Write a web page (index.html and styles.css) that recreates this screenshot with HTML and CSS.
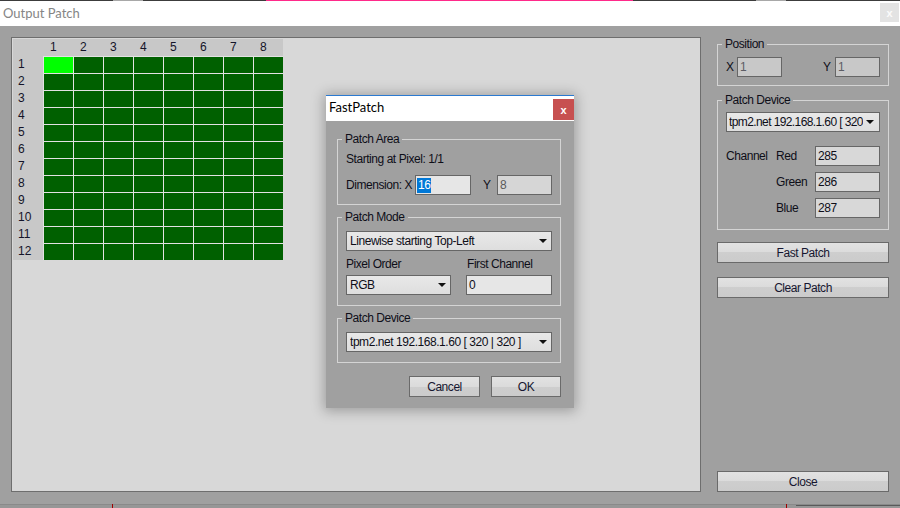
FILE: index.html
```html
<!DOCTYPE html>
<html>
<head>
<meta charset="utf-8">
<title>Output Patch</title>
<link rel="stylesheet" href="styles.css">
</head>
<body>
<div class="topstrip">
  <i class="s dk w113"></i><i class="s lg w30"></i><i class="s dk w123"></i><i class="s pk w367"></i><i class="s dk w123"></i><i class="s lg w30"></i><i class="s dk wrest"></i>
</div>
<div class="titlebar">
  <span class="title">Output Patch</span>
  <span class="winclose">x</span>
</div>
<div class="main">
  <div class="panel">
    <div class="grid">
      <div class="hd"></div>
      <div class="hd col">1</div><div class="hd col">2</div><div class="hd col">3</div><div class="hd col">4</div><div class="hd col">5</div><div class="hd col">6</div><div class="hd col">7</div><div class="hd col">8</div>
      <div class="hd row">1</div><div class="cell on"></div><div class="cell"></div><div class="cell"></div><div class="cell"></div><div class="cell"></div><div class="cell"></div><div class="cell"></div><div class="cell"></div>
      <div class="hd row">2</div><div class="cell"></div><div class="cell"></div><div class="cell"></div><div class="cell"></div><div class="cell"></div><div class="cell"></div><div class="cell"></div><div class="cell"></div>
      <div class="hd row">3</div><div class="cell"></div><div class="cell"></div><div class="cell"></div><div class="cell"></div><div class="cell"></div><div class="cell"></div><div class="cell"></div><div class="cell"></div>
      <div class="hd row">4</div><div class="cell"></div><div class="cell"></div><div class="cell"></div><div class="cell"></div><div class="cell"></div><div class="cell"></div><div class="cell"></div><div class="cell"></div>
      <div class="hd row">5</div><div class="cell"></div><div class="cell"></div><div class="cell"></div><div class="cell"></div><div class="cell"></div><div class="cell"></div><div class="cell"></div><div class="cell"></div>
      <div class="hd row">6</div><div class="cell"></div><div class="cell"></div><div class="cell"></div><div class="cell"></div><div class="cell"></div><div class="cell"></div><div class="cell"></div><div class="cell"></div>
      <div class="hd row">7</div><div class="cell"></div><div class="cell"></div><div class="cell"></div><div class="cell"></div><div class="cell"></div><div class="cell"></div><div class="cell"></div><div class="cell"></div>
      <div class="hd row">8</div><div class="cell"></div><div class="cell"></div><div class="cell"></div><div class="cell"></div><div class="cell"></div><div class="cell"></div><div class="cell"></div><div class="cell"></div>
      <div class="hd row">9</div><div class="cell"></div><div class="cell"></div><div class="cell"></div><div class="cell"></div><div class="cell"></div><div class="cell"></div><div class="cell"></div><div class="cell"></div>
      <div class="hd row">10</div><div class="cell"></div><div class="cell"></div><div class="cell"></div><div class="cell"></div><div class="cell"></div><div class="cell"></div><div class="cell"></div><div class="cell"></div>
      <div class="hd row">11</div><div class="cell"></div><div class="cell"></div><div class="cell"></div><div class="cell"></div><div class="cell"></div><div class="cell"></div><div class="cell"></div><div class="cell"></div>
      <div class="hd row">12</div><div class="cell"></div><div class="cell"></div><div class="cell"></div><div class="cell"></div><div class="cell"></div><div class="cell"></div><div class="cell"></div><div class="cell"></div>
    </div>
  </div>
  <div class="side">
    <fieldset class="grp pos">
      <legend>Position</legend>
      <div class="posrow">
        <div class="pair"><span class="lx">X</span><div class="tb dis wx">1</div></div>
        <div class="pair"><span class="ly">Y</span><div class="tb dis wy">1</div></div>
      </div>
    </fieldset>
    <fieldset class="grp dev">
      <legend>Patch Device</legend>
      <div class="sel tight"><span class="txt">tpm2.net 192.168.1.60 [ 320</span><i class="arrow"></i></div>
      <div class="chgrid">
        <span>Channel</span><span>Red</span><div class="tb">285</div>
        <span></span><span>Green</span><div class="tb">286</div>
        <span></span><span>Blue</span><div class="tb">287</div>
      </div>
    </fieldset>
    <div class="btn fast">Fast Patch</div>
    <div class="btn clear">Clear Patch</div>
    <div class="btn close">Close</div>
  </div>
</div>
<div class="bottom"><i class="tick t1"></i><i class="tick t2"></i><i class="bline"></i></div>

<div class="dlg">
  <div class="dlg-title"><span class="dlg-name">FastPatch</span><span class="dlg-close">x</span></div>
  <div class="dlg-body">
    <fieldset class="grp area">
      <legend>Patch Area</legend>
      <div class="line">Starting at Pixel: 1/1</div>
      <div class="dimrow">
        <span class="dlab">Dimension: X</span>
        <div class="tb light dx"><span class="hl">16</span></div>
        <span class="dylab">Y</span>
        <div class="tb dy">8</div>
      </div>
    </fieldset>
    <fieldset class="grp mode">
      <legend>Patch Mode</legend>
      <div class="sel">
        <span class="txt">Linewise starting Top-Left</span><i class="arrow"></i>
      </div>
      <div class="modegrid">
        <span class="line">Pixel Order</span>
        <span class="line fc">First Channel</span>
        <div class="sel"><span class="txt">RGB</span><i class="arrow"></i></div>
        <div class="tb light">0</div>
      </div>
    </fieldset>
    <fieldset class="grp pdev">
      <legend>Patch Device</legend>
      <div class="sel"><span class="txt">tpm2.net 192.168.1.60 [ 320 | 320 ]</span><i class="arrow"></i></div>
    </fieldset>
    <div class="dlg-btns">
      <div class="btn cancel">Cancel</div>
      <div class="btn ok">OK</div>
    </div>
  </div>
</div>
</body>
</html>
```

FILE: styles.css
```css
* { box-sizing: border-box; }
html, body { margin: 0; padding: 0; }
body {
  width: 900px;
  height: 508px;
  overflow: hidden;
  background: #a0a0a0;
  font-family: "Liberation Sans", Arial, sans-serif;
  font-size: 12px;
  letter-spacing: -0.45px;
  color: #0e0e18;
  display: flex;
  flex-direction: column;
}
i { font-style: normal; display: block; }

/* top strip */
.topstrip { height: 1px; display: flex; flex: none; }
.s { height: 1px; }
.dk { background: #3c3c3c; }
.lg { background: #a8a8a8; }
.pk { background: #ff2a8a; }
.w113 { width: 113px; }
.w30 { width: 30px; }
.w123 { width: 123px; }
.w367 { width: 367px; }
.wrest { flex: 1; }

/* window title */
.titlebar {
  height: 25px;
  flex: none;
  background: #ffffff;
  display: flex;
  justify-content: space-between;
  align-items: flex-start;
  padding: 0 1px 0 3px;
}
.title {
  font-family: "Segoe UI", Lato, sans-serif;
  font-size: 13px;
  letter-spacing: 0;
  color: #858585;
  line-height: 24px;
}
.winclose {
  margin-top: 2px;
  width: 19px;
  height: 19px;
  background: #e3e3e3;
  color: #fbfbfb;
  font-weight: bold;
  font-size: 11px;
  letter-spacing: 0;
  display: flex;
  align-items: center;
  justify-content: center;
}

/* main area */
.main {
  flex: 1;
  display: flex;
  gap: 16px;
  padding: 11px 11px 12px 11px;
}
.panel {
  width: 690px;
  flex: none;
  background: #d8d8d8;
  border: 1px solid #6e6e6e;
  padding: 1px;
}
.grid {
  display: grid;
  grid-template-columns: 30px repeat(8, 30px);
  grid-auto-rows: 17px;
  width: 270px;
  background: #c8c8c8;
}
.hd { line-height: 17px; letter-spacing: 0; color: #141428; }
.hd.col { padding-left: 7px; }
.hd.row { padding-left: 5px; }
.cell {
  background: #006000;
  border-left: 1px solid #e2e2e2;
  border-top: 1px solid #e2e2e2;
}
.cell.on { background: #00ff00; }

/* side column */
.side {
  width: 172px;
  flex: none;
  display: flex;
  flex-direction: column;
}
fieldset.grp {
  margin: 0;
  min-width: 0;
  border: 1px solid #d4d4d4;
  padding: 6px 8px 8px 8px;
}
fieldset.grp legend {
  padding: 0 3px;
  margin-left: -4px;
  line-height: 14px;
}
.posrow {
  display: flex;
  justify-content: space-between;
  align-items: center;
  height: 20px;
}
.pair { display: flex; align-items: center; }
.lx { width: 11px; }
.ly { width: 12px; }
.wx { width: 45px; }
.wy { width: 45px; }

.tb {
  height: 20px;
  border: 1px solid #666666;
  background: #d8d8d8;
  padding: 0 2px;
  line-height: 18px;
  white-space: nowrap;
}
.tb.dis { background: #c8c8c8; color: #5c5c64; }
.tb.light { background: #e6e6e6; }

.sel {
  height: 20px;
  border: 1px solid #666666;
  background: linear-gradient(#e8e8e8, #dedede);
  display: flex;
  align-items: center;
  padding: 0 4px 0 3px;
  overflow: hidden;
  white-space: nowrap;
}
.sel .txt { flex: 1; overflow: hidden; min-width: 0; }
.sel.tight { padding: 0 5px 0 2px; }
.sel.tight .txt { letter-spacing: -0.6px; }
.arrow {
  flex: none;
  margin-left: 4px;
  width: 0;
  height: 0;
  border-left: 4px solid transparent;
  border-right: 4px solid transparent;
  border-top: 4px solid #111111;
}
.sel.tight .arrow { margin-left: 3px; }

.grp.dev { margin-top: 7px; padding: 5px 8px 11px 8px; }
.chgrid {
  margin-top: 14px;
  display: grid;
  grid-template-columns: 50px 39px 1fr;
  grid-template-rows: repeat(3, 20px);
  row-gap: 6px;
  align-items: center;
}

.btn {
  height: 21px;
  border: 1px solid #6a6a6a;
  background: linear-gradient(#e2e2e2 0%, #dbdbdb 50%, #cecece 50%, #cbcbcb 100%);
  display: flex;
  align-items: center;
  justify-content: center;
  color: #161630;
}
.btn.fast { margin-top: 12px; }
.btn.clear { margin-top: 14px; }
.btn.close { margin-top: auto; }

/* bottom strip */
.bottom {
  height: 4px;
  flex: none;
  background: #979797;
  border-top: 1px solid #8a8a8a;
  position: relative;
}
.tick { position: absolute; top: -1px; width: 1px; height: 5px; background: #a00000; }
.t1 { left: 112px; }
.t2 { left: 786px; }
.bline { position: absolute; left: 796px; right: 0; top: 0; height: 1px; background: #5a5a5a; }

/* dialog */
.dlg {
  position: absolute;
  left: 326px;
  top: 95px;
  width: 248px;
  background: #a0a0a0;
  border-top: 1px solid #2b79d0;
  box-shadow: 0 1px 12px 2px rgba(0, 0, 0, 0.28);
}
.dlg-title {
  height: 25px;
  background: #ffffff;
  display: flex;
  justify-content: space-between;
  align-items: flex-start;
  padding-left: 3px;
}
.dlg-name {
  font-family: "Segoe UI", Lato, sans-serif;
  font-size: 13px;
  letter-spacing: 0;
  color: #000000;
  line-height: 23px;
}
.dlg-close {
  margin-top: 3px;
  width: 21px;
  height: 21px;
  background: #c75050;
  color: #ffffff;
  font-weight: bold;
  font-size: 11px;
  letter-spacing: 0;
  display: flex;
  align-items: center;
  justify-content: center;
}
.dlg-body { padding: 11px 13px 11px 11px; }
.line { line-height: 14px; }
.grp.area { padding: 6px 8px 9px 8px; }
.dimrow { margin-top: 9px; display: flex; align-items: center; }
.dlab { width: 69px; }
.dx { width: 56px; padding-left: 1px; }
.hl { background: #0078d7; color: #ffffff; display: inline-block; line-height: 15px; padding: 0 1px; }
.dylab { width: 14px; margin-left: 12px; }
.dy { width: 55px; background: #d6d6d6; color: #5a5a5a; }
.grp.mode { margin-top: 5px; padding: 7px 8px 10px 8px; }
.modegrid {
  margin-top: 6px;
  display: grid;
  grid-template-columns: 105px 86px;
  column-gap: 15px;
  row-gap: 4px;
}
.fc { padding-left: 1px; }
.grp.pdev { margin-top: 5px; padding: 7px 8px 10px 8px; }
.dlg-btns {
  margin-top: 13px;
  display: flex;
  justify-content: flex-end;
  gap: 11px;
}
.btn.cancel { width: 71px; }
.btn.ok { width: 70px; }
```
